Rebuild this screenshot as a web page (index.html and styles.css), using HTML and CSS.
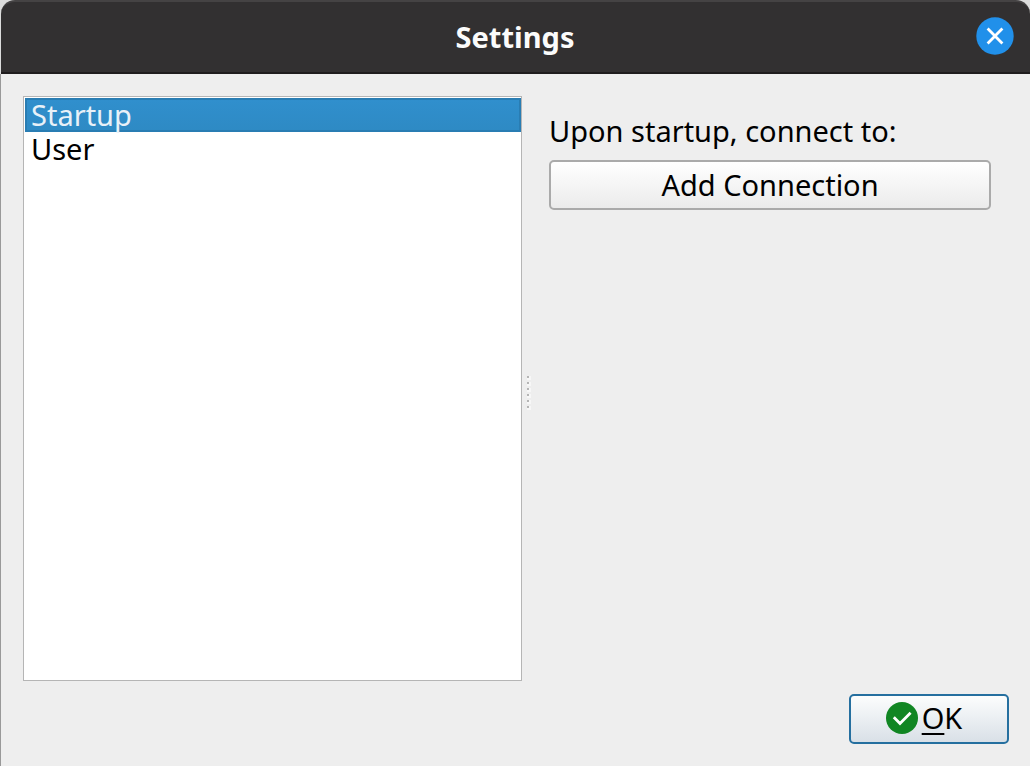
FILE: index.html
```html
<!DOCTYPE html>
<html lang="en">
<head>
<meta charset="utf-8">
<title>Settings</title>
<link rel="stylesheet" href="styles.css">
</head>
<body>
<div class="window">
  <header class="titlebar">
    <h1 class="title">Settings</h1>
    <button class="close" type="button" aria-label="Close">
      <svg viewBox="0 0 38 38" aria-hidden="true"><circle cx="19" cy="19" r="18.7" fill="#2190ea"/><path d="M11.6 11.6l14.8 14.8M26.4 11.6L11.6 26.4" stroke="#fff" stroke-width="2.8" fill="none"/></svg>
    </button>
  </header>
  <main class="content">
    <div class="split">
      <div class="list" role="listbox" aria-label="Settings categories">
        <button class="item selected" type="button" role="option" aria-selected="true">Startup</button>
        <button class="item" type="button" role="option" aria-selected="false">User</button>
      </div>
      <div class="handle" role="separator" aria-orientation="vertical">
        <span class="dot"></span><span class="dot"></span><span class="dot"></span><span class="dot"></span><span class="dot"></span><span class="dot"></span>
      </div>
      <section class="panel">
        <p class="label">Upon startup, connect to:</p>
        <button class="button" type="button">Add Connection</button>
      </section>
    </div>
    <footer class="actions">
      <button class="button ok" type="button">
        <svg class="check" viewBox="0 0 32 32" aria-hidden="true"><circle cx="16" cy="16" r="16" fill="#118623"/><path d="M7.8 15.2l6.2 6.2L24.6 10.8" stroke="#fff" stroke-width="2.8" fill="none"/></svg>
        <span class="ok-text"><span class="mnemonic">O</span>K</span>
      </button>
    </footer>
  </main>
</div>
</body>
</html>
```
FILE: styles.css
```css
* { box-sizing: border-box; }
body {
  margin: 0;
  background: #dcdcdc;
  color: #000;
  font: 29px/34px "Noto Sans", sans-serif;
}
button { font: inherit; color: inherit; margin: 0; }
.window {
  display: flex;
  flex-direction: column;
  min-height: 100vh;
}
.titlebar {
  display: grid;
  grid-template-columns: 1fr auto 1fr;
  align-items: center;
  height: 74px;
  padding: 0 16px 0 15px;
  margin-left: 1px;
  background: #323031;
  border-top: 2px solid #454344;
  border-bottom: 2px solid #1f1d1e;
  border-radius: 14px 14px 0 0;
}
.title {
  grid-column: 2;
  margin: 0;
  color: #fbfbfb;
  font-size: 29px;
  font-weight: 700;
}
.close {
  justify-self: end;
  align-self: start;
  width: 38px;
  height: 38px;
  margin-top: 15px;
  padding: 0;
  border: 0;
  background: none;
}
.close svg { display: block; }
.content {
  flex: 1;
  display: flex;
  flex-direction: column;
  gap: 13px;
  padding: 22px 21px 22px 22px;
  background: #eee;
  border-left: 1px solid #999;
}
.split {
  flex: 1;
  display: grid;
  grid-template-columns: 499fr 13px 474fr;
}
.list {
  display: flex;
  flex-direction: column;
  padding: 1px 0 0 1px;
  background: #fff;
  border: 1px solid #b5b5b5;
}
.item {
  height: 34px;
  padding: 0 5px;
  border: 1px solid transparent;
  background: none;
  text-align: left;
  line-height: 32px;
}
.item.selected {
  color: #e8f1f8;
  background: linear-gradient(#308fcd, #2e8ac4);
  border: 2px solid #297db3;
  padding: 0 4px;
  line-height: 30px;
}
.handle {
  display: flex;
  flex-direction: column;
  justify-content: center;
  gap: 4px;
  padding: 7px 0 0 5px;
}
.dot {
  width: 2px;
  height: 2px;
  background: #b5b5b5;
  box-shadow: 1px 1px 0 1px #f7f7f7;
}
.panel {
  display: flex;
  flex-direction: column;
  gap: 12px;
  padding: 18px 18px 0 14px;
}
.label { margin: 0; }
.button {
  height: 50px;
  padding: 0 12px;
  border: 2px solid #aaa;
  border-radius: 5px;
  background: linear-gradient(#fff, #ebebeb);
}
.actions { display: flex; justify-content: flex-end; }
.ok {
  display: flex;
  align-items: center;
  justify-content: center;
  gap: 4px;
  width: 160px;
  padding: 0 22px 2px 12px;
  border-color: #256f9f;
  background: linear-gradient(#fcfdfd, #d9e0e7);
}
.check { width: 32px; height: 32px; }
.mnemonic {
  text-decoration: underline;
  text-decoration-thickness: 2px;
  text-underline-offset: 4px;
}
```
